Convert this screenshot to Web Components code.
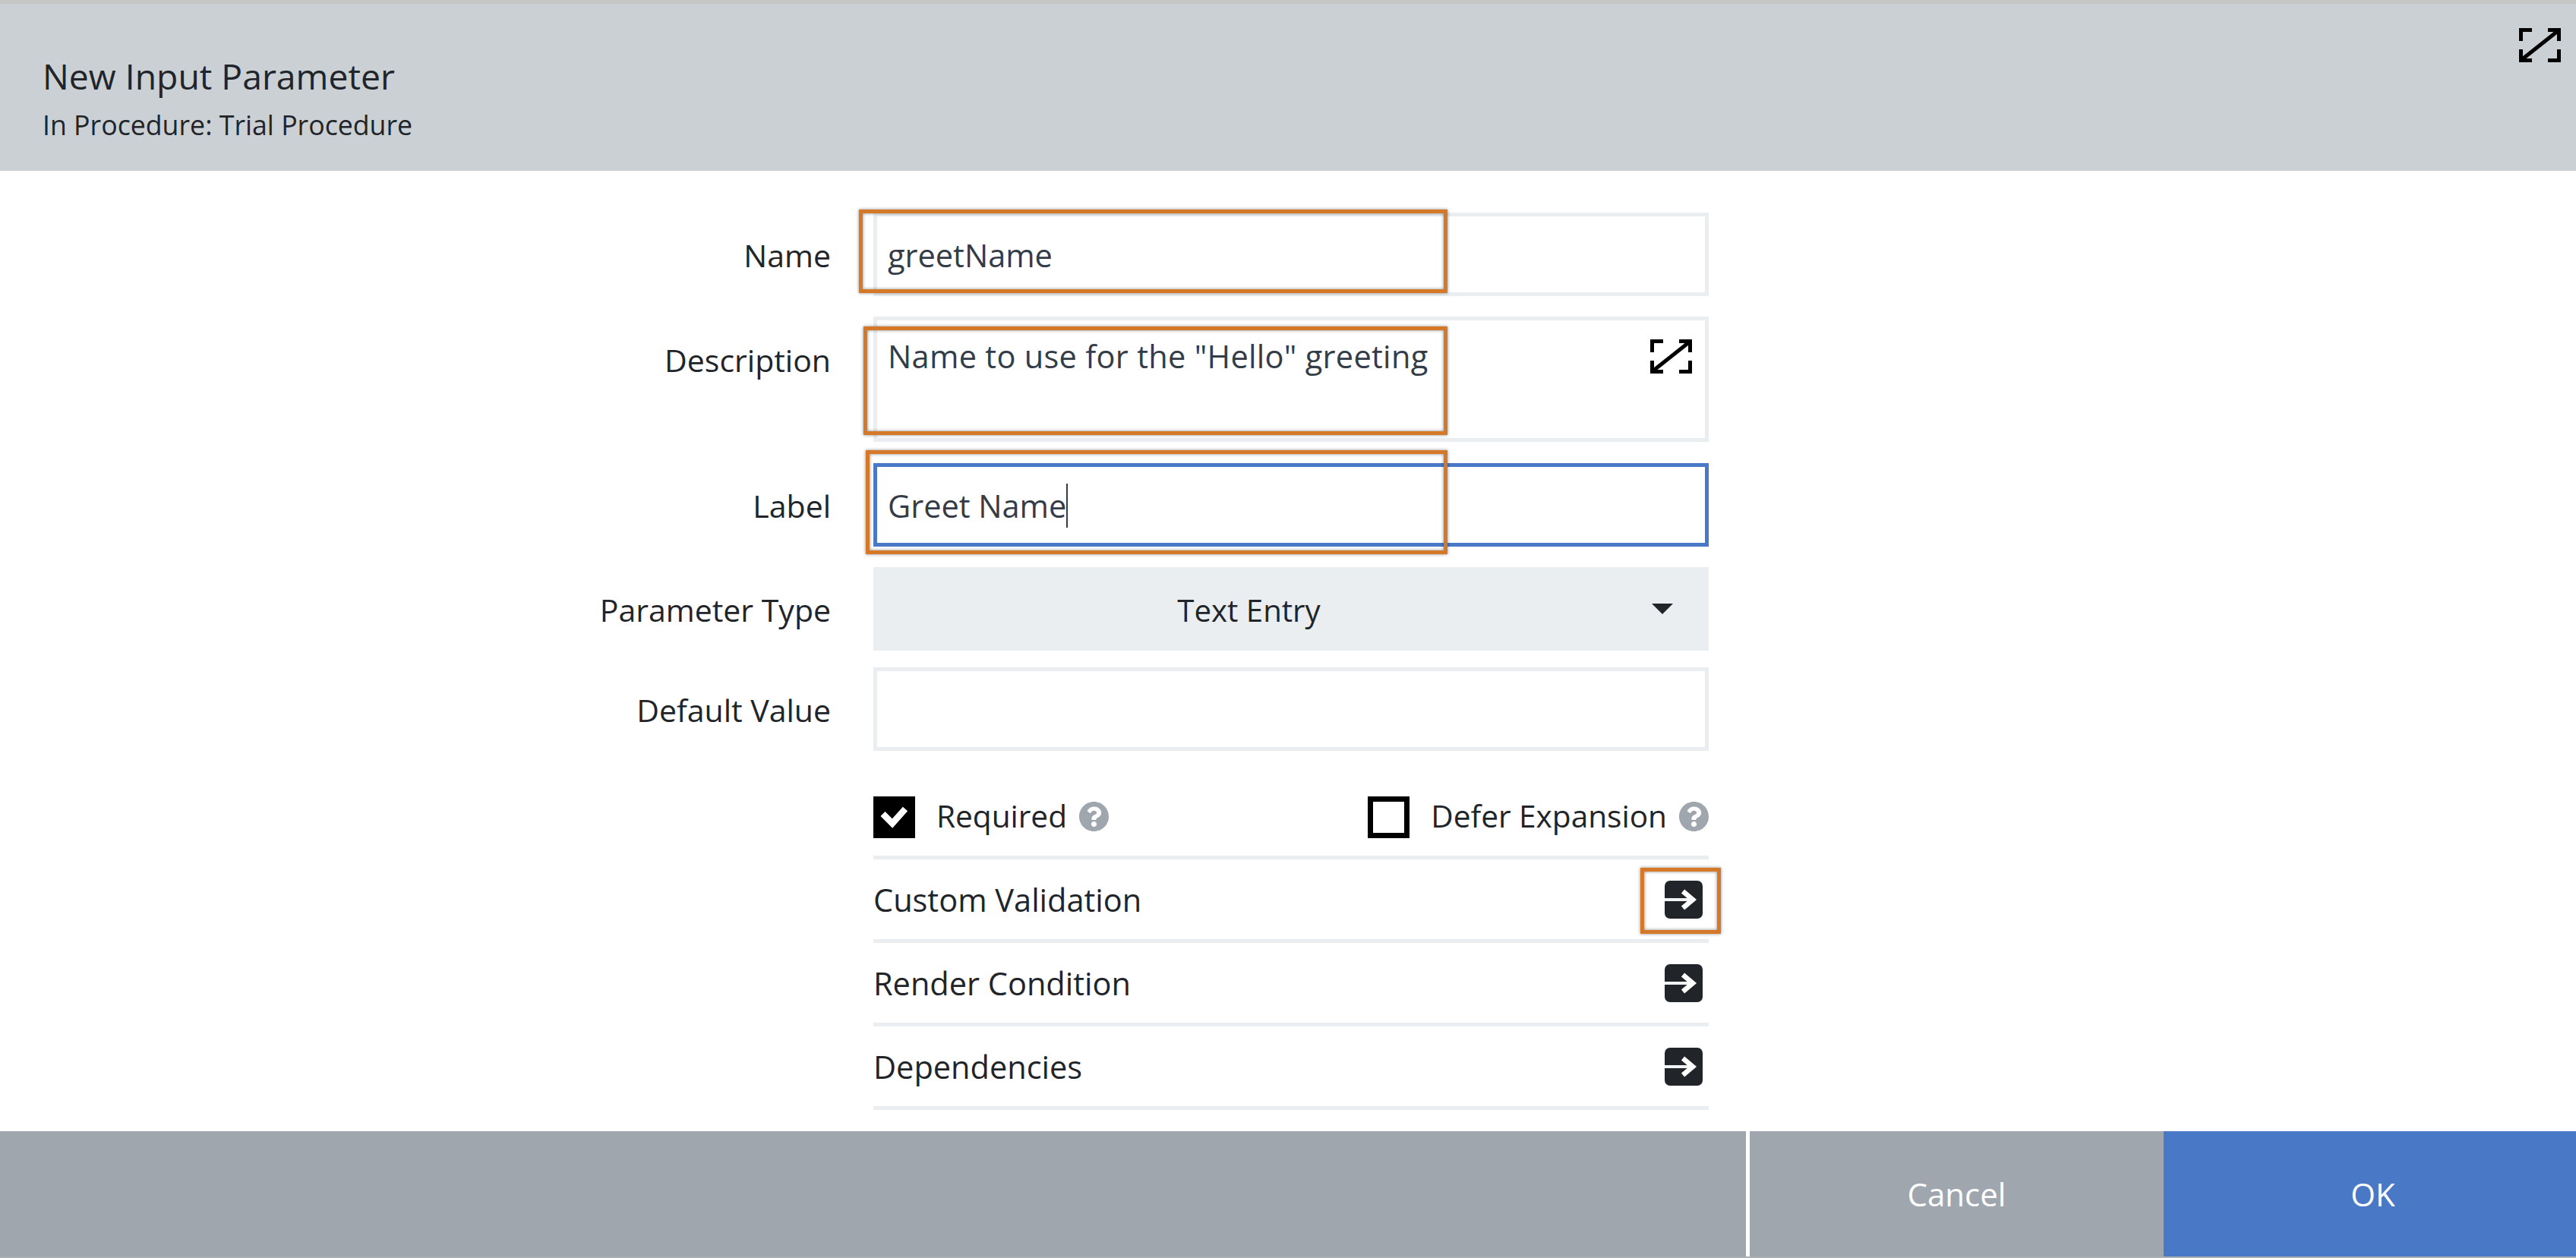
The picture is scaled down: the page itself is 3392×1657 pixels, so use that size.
<!DOCTYPE html>
<html>
<head>
<meta charset="utf-8">
<title>New Input Parameter</title>
<style>
    html, body { margin: 0; height: 100%; background: #fff; }
    body {
        font-family: "Open Sans", "Liberation Sans", sans-serif;
        font-size: 41px;
        font-weight: 375;
        color: #212529;
    }
</style>
</head>
<body>
<param-dialog>
    <dialog-header slot="header" title="New Input Parameter" subtitle="In Procedure: Trial Procedure"></dialog-header>

    <form-row label="Name" gap="27"><text-box>greetName</text-box></form-row>
    <form-row label="Description" gap="28" top><text-box multi expand>Name to use for the "Hello" greeting</text-box></form-row>
    <form-row label="Label" gap="27"><text-box focused>Greet Name</text-box></form-row>
    <form-row label="Parameter Type" gap="22"><select-box>Text Entry</select-box></form-row>
    <form-row label="Default Value" gap="0"><text-box></text-box></form-row>

    <form-row gap="0">
        <check-row>
            <check-item checked>Required</check-item>
            <check-item>Defer Expansion</check-item>
        </check-row>
    </form-row>
    <form-row gap="0"><action-row>Custom Validation</action-row></form-row>
    <form-row gap="0"><action-row>Render Condition</action-row></form-row>
    <form-row gap="0"><action-row>Dependencies</action-row></form-row>

    <note-box style="left:1131px;top:276px;width:775px;height:110px"></note-box>
    <note-box style="left:1137px;top:430px;width:769px;height:143px"></note-box>
    <note-box style="left:1140px;top:593px;width:766px;height:137px"></note-box>
    <note-box style="left:2160px;top:1143px;width:106px;height:87px"></note-box>

    <dialog-footer slot="footer"></dialog-footer>
</param-dialog>

<script>
    // same glyph in the header and in the description box
    const expandIcon = `
        <svg width="55" height="45" viewBox="0 0 55 45" fill="none" stroke="#000" stroke-width="5" stroke-linecap="butt">
            <path d="M17 2.5H2.5V17M38 2.5H52.5V17M2.5 28V42.5H17M52.5 28V42.5H38"/>
            <path d="M3.5 41.5L51.5 3.5"/>
        </svg>`;

    class ParamDialog extends HTMLElement {
        constructor() {
            super();
            this.attachShadow({ mode: 'open' });
            this.shadowRoot.innerHTML = `
                <style>
                    :host {
                        display: flex;
                        flex-direction: column;
                        position: relative;
                        height: 1657px;
                        overflow: hidden;
                    }
                    .strip-top { height: 5px; background: #c5c7c7; }
                    .strip-bottom { height: 2px; background: #abafb2; }
                    .body {
                        flex: 1;
                        display: flex;
                        flex-direction: column;
                        padding: 55px 0 0 700px;
                    }
                </style>
                <div class="strip-top"></div>
                <slot name="header"></slot>
                <div class="body"><slot></slot></div>
                <slot name="footer"></slot>
                <div class="strip-bottom"></div>
            `;
        }
    }

    class DialogHeader extends HTMLElement {
        constructor() {
            super();
            this.attachShadow({ mode: 'open' });
            this.shadowRoot.innerHTML = `
                <style>
                    :host {
                        display: flex;
                        justify-content: space-between;
                        height: 220px;
                        background: #cbd0d5;
                        box-sizing: border-box;
                        padding: 0 20px 0 56px;
                    }
                    .title { font-size: 46.3px; line-height: 64px; margin-top: 64px; }
                    .sub { font-size: 35.7px; line-height: 48px; margin-top: 7px; }
                    svg { display: block; margin-top: 32px; }
                </style>
                <div>
                    <div class="title"></div>
                    <div class="sub"></div>
                </div>
                ${expandIcon}
            `;
            this.shadowRoot.querySelector('.title').textContent = this.getAttribute('title');
            this.shadowRoot.querySelector('.sub').textContent = this.getAttribute('subtitle');
        }
    }

    class FormRow extends HTMLElement {
        constructor() {
            super();
            this.attachShadow({ mode: 'open' });
            this.shadowRoot.innerHTML = `
                <style>
                    :host {
                        display: grid;
                        grid-template-columns: 394px 1100px;
                        column-gap: 56px;
                        align-items: center;
                    }
                    .label { font-size: 41px; text-align: right; white-space: nowrap; padding-top: 2px; }
                    :host([top]) { align-items: start; }
                    :host([top]) .label { padding-top: 29px; }
                </style>
                <div class="label"></div>
                <slot></slot>
            `;
            this.shadowRoot.querySelector('.label').textContent = this.getAttribute('label') || '';
            this.style.marginBottom = (this.getAttribute('gap') || 0) + 'px';
        }
    }

    class TextBox extends HTMLElement {
        constructor() {
            super();
            this.attachShadow({ mode: 'open' });
            this.shadowRoot.innerHTML = `
                <style>
                    :host {
                        display: flex;
                        align-items: center;
                        justify-content: space-between;
                        position: relative;
                        box-sizing: border-box;
                        height: 110px;
                        border: 5px solid #ebeef1;
                        padding: 2px 17px 0 14px;
                        color: #343c48;
                        font-size: 41.5px;
                        white-space: nowrap;
                    }
                    :host([multi]) { height: 165px; align-items: flex-start; padding-top: 19px; letter-spacing: .3px; }
                    :host([focused]) { border-color: #4878c6; }
                    .caret { display: none; width: 2px; height: 58px; background: #343c48; }
                    :host([focused]) .caret { display: inline-block; }
                    .expand { display: none; margin-top: 6px; }
                    :host([expand]) .expand { display: block; }
                    .text { display: flex; align-items: center; }
                    svg { display: block; }
                </style>
                <div class="text"><slot></slot><span class="caret"></span></div>
                <div class="expand">${expandIcon}</div>
            `;
        }
    }

    class SelectBox extends HTMLElement {
        constructor() {
            super();
            this.attachShadow({ mode: 'open' });
            this.shadowRoot.innerHTML = `
                <style>
                    :host {
                        display: flex;
                        align-items: center;
                        height: 110px;
                        background: #ebeef1;
                        padding: 0 47px 0 0;
                    }
                    .value { flex: 1; font-size: 40.2px; text-align: center; padding: 2px 36px 0 0; }
                    .caret {
                        width: 0;
                        height: 0;
                        border-left: 14px solid transparent;
                        border-right: 14px solid transparent;
                        border-top: 14px solid #212529;
                    }
                </style>
                <div class="value"><slot></slot></div>
                <div class="caret"></div>
            `;
        }
    }

    class CheckRow extends HTMLElement {
        constructor() {
            super();
            this.attachShadow({ mode: 'open' });
            this.shadowRoot.innerHTML = `
                <style>
                    :host {
                        display: flex;
                        justify-content: space-between;
                        align-items: center;
                        box-sizing: border-box;
                        height: 143px;
                        padding-top: 37px;
                        font-size: 40.6px;
                        border-bottom: 5px solid #ebeef1;
                    }
                </style>
                <slot></slot>
            `;
        }
    }

    class CheckItem extends HTMLElement {
        constructor() {
            super();
            this.attachShadow({ mode: 'open' });
            this.shadowRoot.innerHTML = `
                <style>
                    :host { display: flex; align-items: center; }
                    .box {
                        box-sizing: border-box;
                        width: 55px;
                        height: 55px;
                        border: 7px solid #000;
                        margin-right: 28px;
                    }
                    :host([checked]) .box { background: #000; }
                    .box svg { display: none; margin: -7px; }
                    :host([checked]) .box svg { display: block; }
                    .text { margin-top: -4px; }
                    .help { display: block; margin: -3px 0 0 16px; }
                </style>
                <div class="box">
                    <svg width="55" height="55" viewBox="0 0 55 55" fill="none" stroke="#fff" stroke-width="8.5">
                        <path d="M12.5 23L25 35.5L42 16.5"/>
                    </svg>
                </div>
                <div class="text"><slot></slot></div>
                <svg class="help" width="39" height="39" viewBox="8 8 496 496" fill="#9fa6ad">
                    <path d="M504 256c0 136.997-111.043 248-248 248S8 392.997 8 256C8 119.083 119.043 8 256 8s248 111.083 248 248zM262.655 90c-54.497 0-89.255 22.957-116.549 63.758-3.536 5.286-2.353 12.415 2.715 16.258l34.699 26.31c5.205 3.947 12.621 3.008 16.665-2.122 17.864-22.658 30.113-35.797 57.303-35.797 20.429 0 45.698 13.148 45.698 32.958 0 14.976-12.363 22.667-32.534 33.976C247.128 238.528 216 254.941 216 296v4c0 6.627 5.373 12 12 12h56c6.627 0 12-5.373 12-12v-1.333c0-28.462 83.186-29.647 83.186-106.667 0-58.002-60.165-102-116.531-102zM256 338c-25.365 0-46 20.635-46 46 0 25.364 20.635 46 46 46s46-20.636 46-46c0-25.365-20.635-46-46-46z"/>
                </svg>
            `;
        }
    }

    class ActionRow extends HTMLElement {
        constructor() {
            super();
            this.attachShadow({ mode: 'open' });
            this.shadowRoot.innerHTML = `
                <style>
                    :host {
                        display: flex;
                        justify-content: space-between;
                        align-items: center;
                        box-sizing: border-box;
                        height: 110px;
                        padding-right: 8px;
                        font-size: 41.5px;
                        border-bottom: 5px solid #ebeef1;
                    }
                    svg { display: block; }
                </style>
                <div><slot></slot></div>
                <svg width="50" height="50" viewBox="0 0 50 50">
                    <rect width="50" height="50" rx="7" fill="#212529"/>
                    <path d="M0 25H36" stroke="#f2f3f4" stroke-width="4" fill="none"/>
                    <path d="M24 14L37 25L24 36" stroke="#fff" stroke-width="6.5" fill="none"/>
                </svg>
            `;
        }
    }

    class NoteBox extends HTMLElement {
        constructor() {
            super();
            this.attachShadow({ mode: 'open' });
            this.shadowRoot.innerHTML = `
                <style>
                    :host {
                        display: block;
                        position: absolute;
                        box-sizing: border-box;
                        border: 5px solid #d57828;
                        box-shadow: 0 0 4px rgba(0,0,0,.45), inset 0 0 4px rgba(0,0,0,.45);
                    }
                </style>
            `;
        }
    }

    class DialogFooter extends HTMLElement {
        constructor() {
            super();
            this.attachShadow({ mode: 'open' });
            this.shadowRoot.innerHTML = `
                <style>
                    :host {
                        display: flex;
                        justify-content: flex-end;
                        height: 165px;
                        background: #9fa6ad;
                        color: #fff;
                    }
                    .btn {
                        width: 545px;
                        display: flex;
                        align-items: center;
                        justify-content: center;
                        font-size: 42px;
                        font-weight: 400;
                    }
                    .cancel { border-left: 5px solid #fff; }
                    .ok { box-sizing: border-box; width: 543px; padding-left: 8px; background: #4878c6; }
                </style>
                <div class="btn cancel">Cancel</div>
                <div class="btn ok">OK</div>
            `;
        }
    }

    customElements.define('param-dialog', ParamDialog);
    customElements.define('dialog-header', DialogHeader);
    customElements.define('form-row', FormRow);
    customElements.define('text-box', TextBox);
    customElements.define('select-box', SelectBox);
    customElements.define('check-row', CheckRow);
    customElements.define('check-item', CheckItem);
    customElements.define('action-row', ActionRow);
    customElements.define('note-box', NoteBox);
    customElements.define('dialog-footer', DialogFooter);
</script>
</body>
</html>
